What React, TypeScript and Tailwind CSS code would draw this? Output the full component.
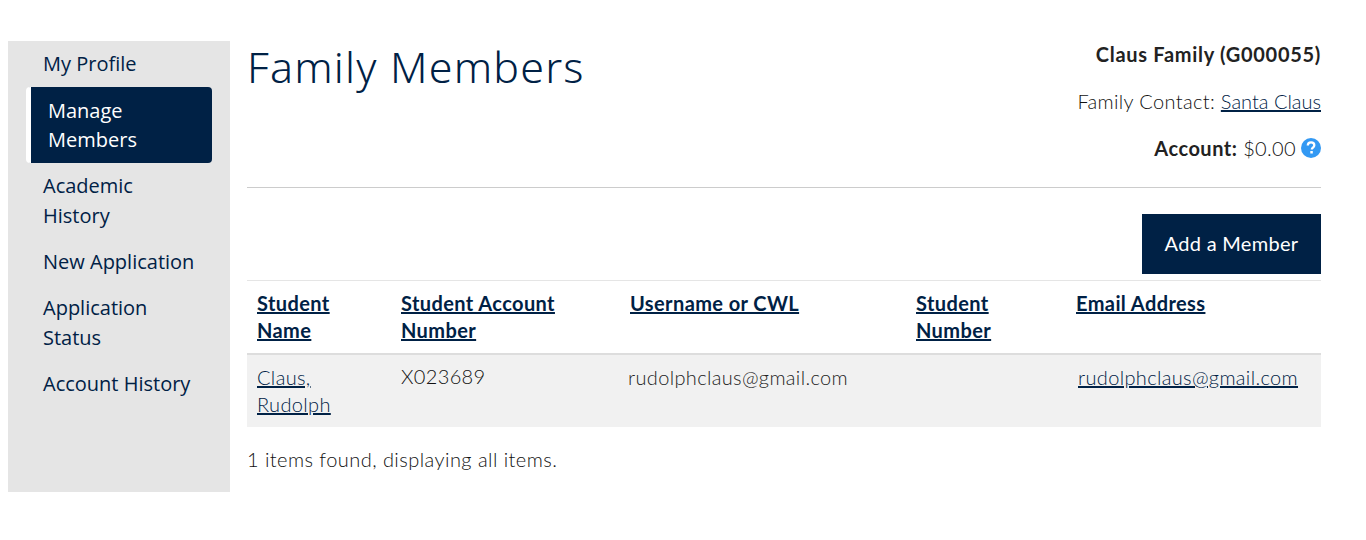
const NAV_ITEMS = [
  { label: "My Profile", active: false },
  { label: "Manage Members", active: true },
  { label: "Academic History", active: false },
  { label: "New Application", active: false },
  { label: "Application Status", active: false },
  { label: "Account History", active: false },
];

const COLUMNS = [
  { label: "Student Name", width: "w-[144px]" },
  { label: "Student Account Number", width: "w-[229px]" },
  { label: "Username or CWL", width: "w-[286px]" },
  { label: "Student Number", width: "w-[160px]" },
  { label: "Email Address", width: "" },
];

function HelpIcon() {
  return (
    <svg viewBox="0 0 20 20" className="h-[20px] w-[20px]">
      <circle cx="10" cy="10" r="10" fill="#3399f3" />
      <path
        d="M6.8 7.6c0-2 1.4-3.2 3.3-3.2s3.2 1.1 3.2 2.8c0 2.4-2.5 2.4-2.5 4.3"
        fill="none"
        stroke="#fff"
        strokeWidth="2.3"
      />
      <rect x="9.3" y="13" width="2.5" height="2.5" fill="#fff" />
    </svg>
  );
}

function Sidebar() {
  return (
    <nav className="flex h-[451px] w-[222px] shrink-0 flex-col bg-[#e5e5e5] font-['Open_Sans',sans-serif] text-[20px] leading-[30px] font-normal tracking-normal text-[#002145]">
      {NAV_ITEMS.map((item) =>
        item.active ? (
          <a
            key={item.label}
            className="mt-[8px] mb-[8px] ml-[18px] mr-[18px] rounded-[4px] border-l-[5px] border-white bg-[#002145] py-[9px] pl-[17px] pr-[40px] leading-[29px] text-white"
          >
            {item.label}
          </a>
        ) : (
          <a
            key={item.label}
            className="mb-[16px] pl-[35px] pr-[30px] first:mb-0 first:pt-[8px]"
          >
            {item.label}
          </a>
        )
      )}
    </nav>
  );
}

export default function App() {
  return (
    <div className="h-[540px] bg-white pt-[41px] pl-[8px] font-['Lato',sans-serif] text-[20px] font-light tracking-[0.35px] text-[#111]">
      <div className="flex">
        <Sidebar />

        <main className="ml-[17px] w-[1074px]">
          <header className="flex h-[147px] justify-between border-b border-[#ccc]">
            <h1 className="font-['Noto_Sans',sans-serif] text-[43px] leading-[52px] font-light tracking-[1.2px] text-[#002145]">
              Family Members
            </h1>
            <div className="text-right leading-[28px]">
              <p className="-mt-[1px] font-bold tracking-[0.7px] text-[#222]">Claus Family (G000055)</p>
              <p className="mt-[19px]">
                Family Contact:{" "}
                <a className="tracking-normal text-[#002145] underline">Santa Claus</a>
              </p>
              <p className="mt-[19px] flex items-center justify-end gap-[5px]">
                <span>
                  <b className="font-bold tracking-[0.5px] text-[#222]">Account:</b> $0.00
                </span>
                <HelpIcon />
              </p>
            </div>
          </header>

          <div className="mt-[26px] flex justify-end">
            <button className="h-[60px] w-[179px] bg-[#002145] pb-[2px] text-[20px] font-normal tracking-[0.3px] text-white">
              Add a Member
            </button>
          </div>

          <table className="mt-[6px] w-full border-t border-[#e5e5e5]">
            <thead>
              <tr className="border-b-2 border-[#ddd] align-top">
                {COLUMNS.map((col) => (
                  <th
                    key={col.label}
                    className={`${col.width} px-[10px] pt-[9px] pb-[9px] text-left text-[20px] leading-[27px] font-bold tracking-[0.4px] text-[#002145] underline`}
                  >
                    {col.label}
                  </th>
                ))}
              </tr>
            </thead>
            <tbody>
              <tr className="bg-[#f1f1f1] align-top leading-[27px]">
                <td className="px-[10px] pt-[9px] pb-[9px] text-[#002145] underline">
                  Claus,
                  <br />
                  Rudolph
                </td>
                <td className="px-[10px] pt-[8px]">X023689</td>
                <td className="px-[8px] pt-[9px] text-[#222]">rudolphclaus@gmail.com</td>
                <td className="px-[10px] pt-[9px]"></td>
                <td className="px-[12px] pt-[9px] text-[#002145] underline">
                  rudolphclaus@gmail.com
                </td>
              </tr>
            </tbody>
          </table>

          <p className="mt-[19px] leading-[27px] tracking-[0.45px]">1 items found, displaying all items.</p>
        </main>
      </div>
    </div>
  );
}
